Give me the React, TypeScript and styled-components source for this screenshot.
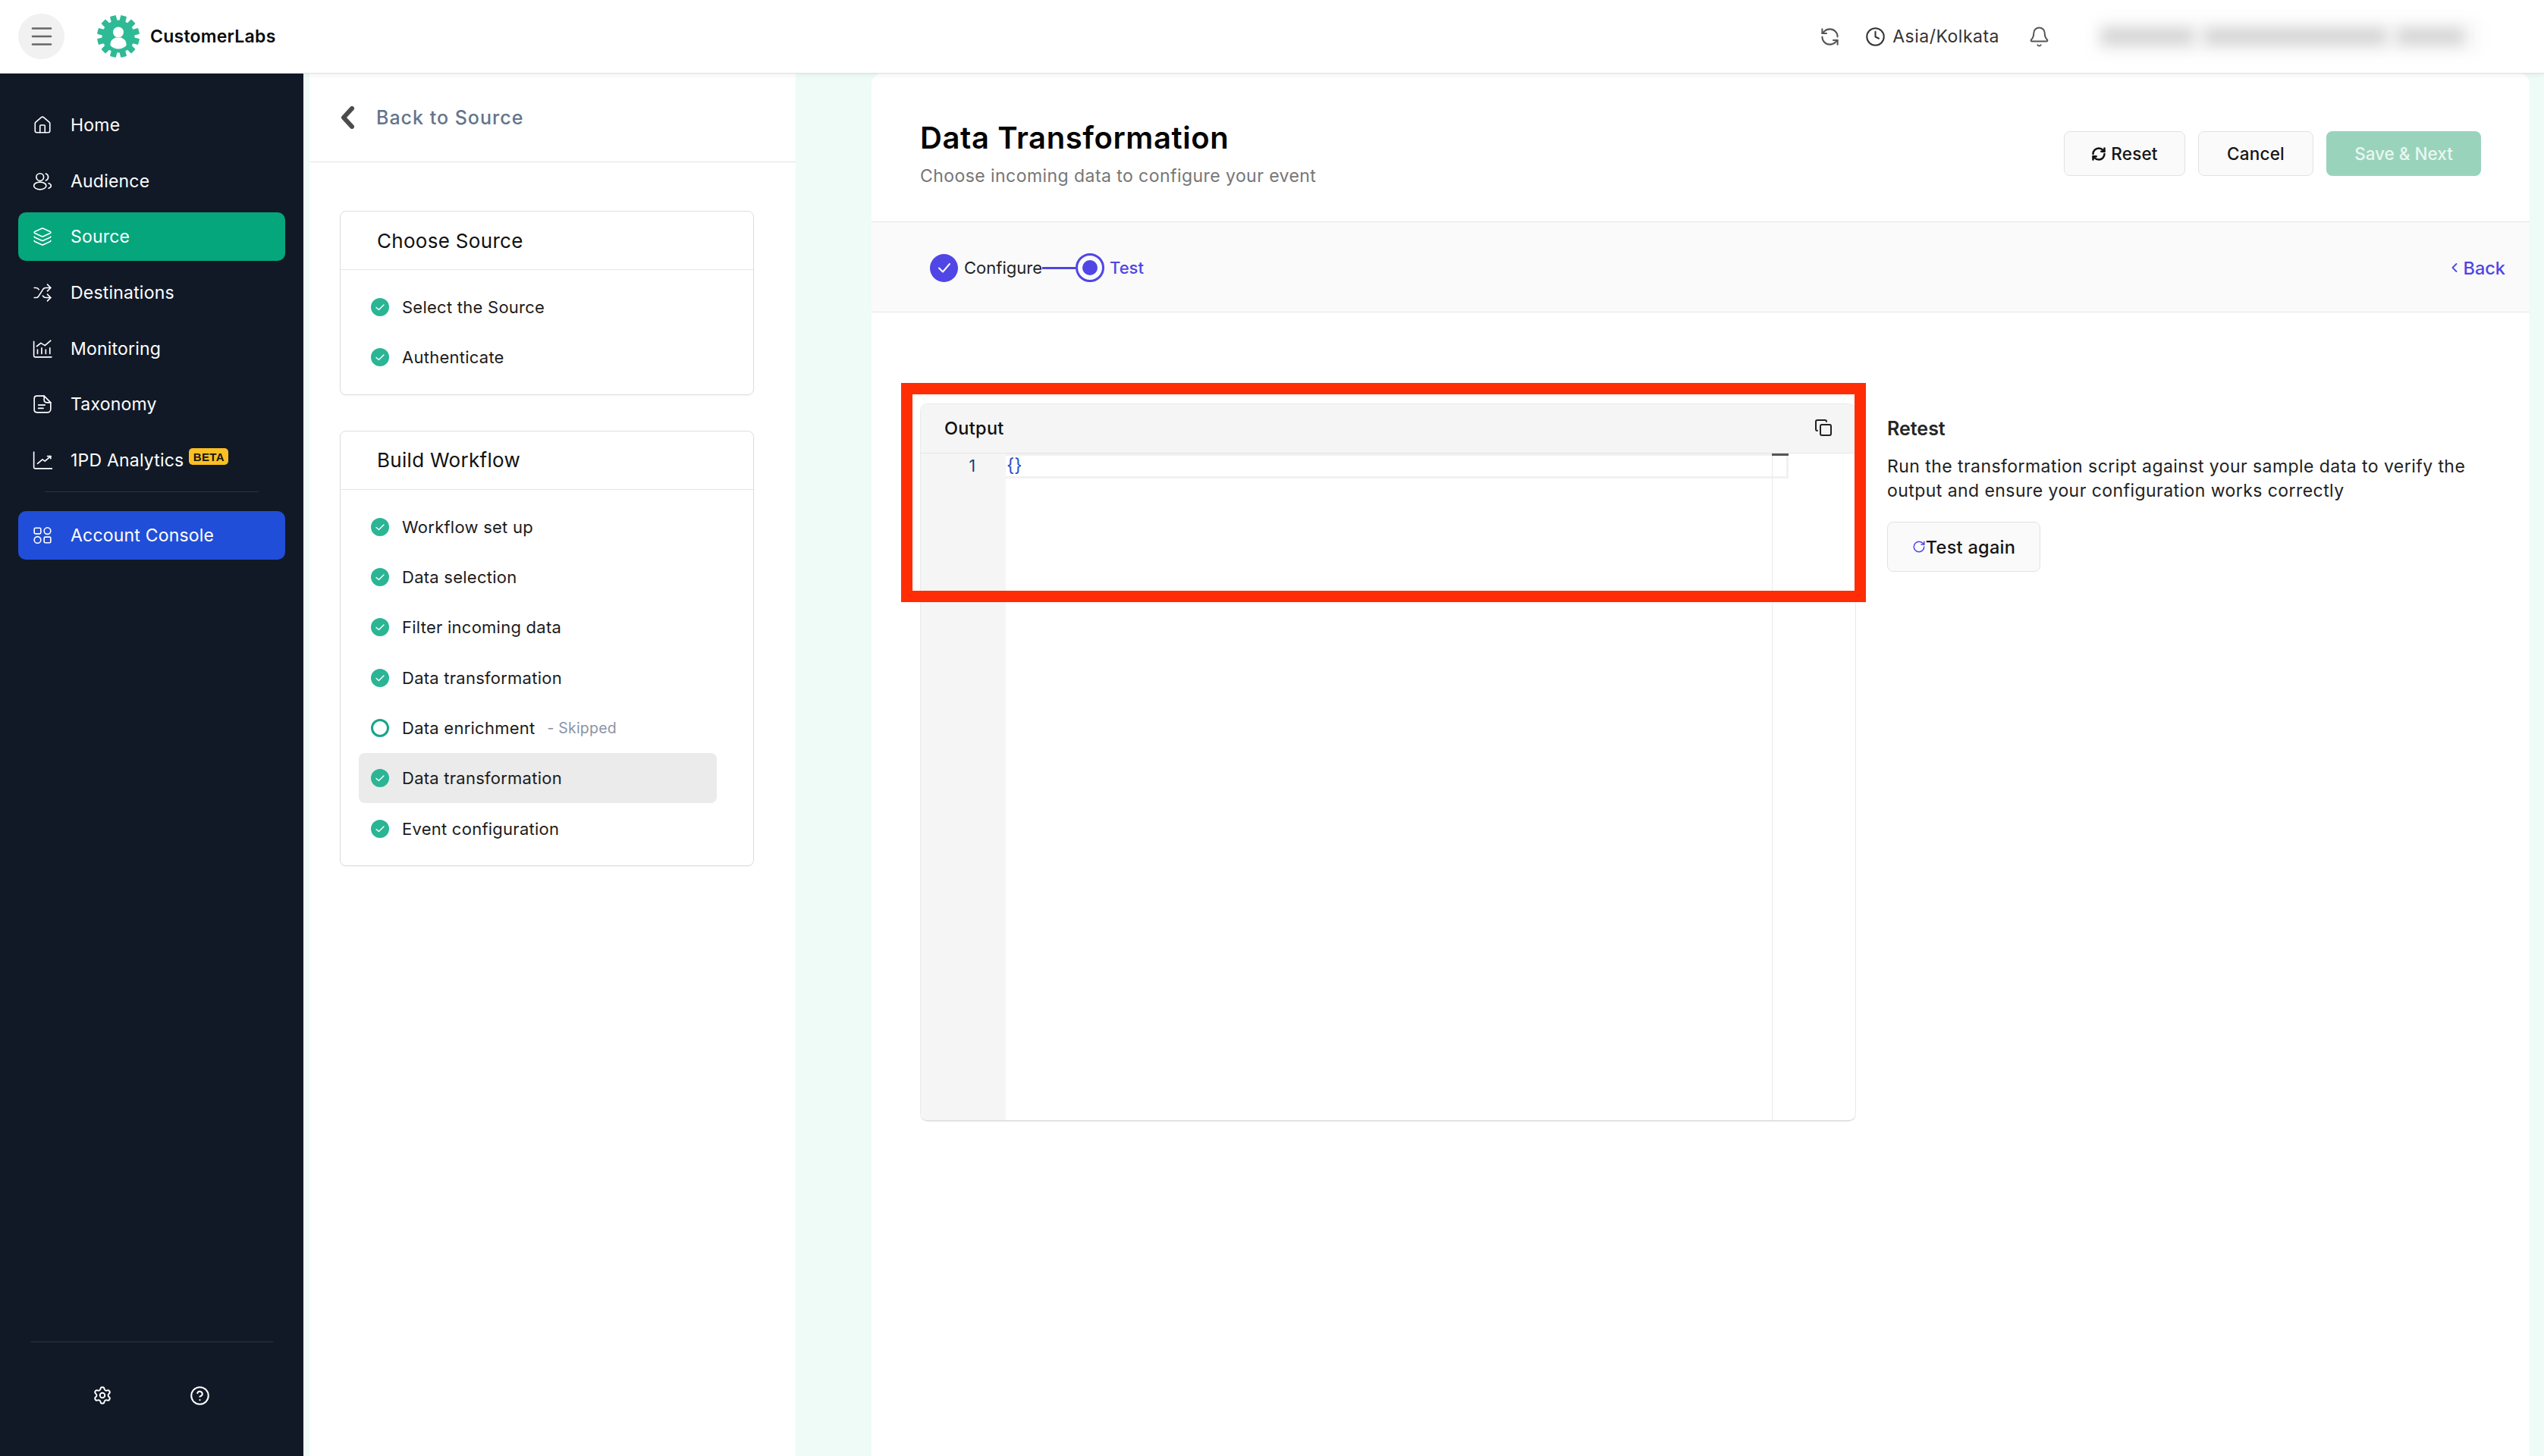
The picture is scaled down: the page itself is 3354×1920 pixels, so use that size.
import styled, { createGlobalStyle } from "styled-components";
import { Bell, CircleHelp, Clock, Copy, House, Layers, Menu, RefreshCcw, RefreshCw, RotateCw, Settings, Shuffle } from "lucide-react";

const GlobalStyle = createGlobalStyle`
    html, body {
        margin: 0;
        padding: 0;
        background: #fff;
    }
    * {
        box-sizing: border-box;
    }
    body {
        font-family: Inter, "Noto Sans", "Liberation Sans", sans-serif;
        color: #1f1f1f;
    }
`;

const Page = styled.div`
    width: 3354px;
    height: 1920px;
    display: flex;
    flex-direction: column;
    overflow: hidden;
`;

const TopBar = styled.header`
    height: 97px;
    flex: none;
    display: flex;
    align-items: center;
    padding: 0 86px 0 24px;
    background: #fff;
    border-bottom: 1px solid #e2e2e2;
    box-shadow: 0 2px 6px rgba(0, 0, 0, 0.06);
    position: relative;
    z-index: 2;
`;

const MenuButton = styled.button`
    width: 61px;
    height: 60px;
    border: none;
    border-radius: 50%;
    background: #f1f1f1;
    color: #666;
    display: flex;
    align-items: center;
    justify-content: center;
    padding: 0;
`;

const Logo = styled.div`
    margin-left: 43px;
    display: flex;
    align-items: center;
    gap: 14px;
`;

const LogoText = styled.span`
    font-size: 23px;
    font-weight: 600;
    letter-spacing: 0.25px;
    color: #0b0b0b;
`;

const TopRight = styled.div`
    margin-left: auto;
    display: flex;
    align-items: center;
    color: #555;
`;

const TimeZone = styled.div`
    margin-left: 33px;
    display: flex;
    align-items: center;
    gap: 9px;
    font-size: 23px;
    letter-spacing: 0.5px;
    color: #333;
`;

const BellWrap = styled.div`
    margin-left: 38px;
    display: flex;
`;

const BlurredUser = styled.div`
    margin-left: 61px;
    width: 504px;
    height: 45px;
    padding: 0 14px 0 6px;
    display: flex;
    align-items: center;
    gap: 14px;
    background: #f8f8f8;
    filter: blur(9px);
`;

const BlurBlob = styled.span<{ $w: number }>`
    width: ${(p) => p.$w}px;
    height: 22px;
    background: #d4d4d4;
`;

const Body = styled.div`
    flex: 1;
    min-height: 0;
    display: flex;
    background: #eefbf6;
`;

const Sidebar = styled.aside`
    width: 400px;
    flex: none;
    background: #111927;
    padding: 36px 24px 0;
    display: flex;
    flex-direction: column;
`;

const NavList = styled.nav`
    display: flex;
    flex-direction: column;
    gap: 9.7px;
`;

const NavItem = styled.a<{ $bg?: string }>`
    height: 64px;
    padding-left: 19px;
    display: flex;
    align-items: center;
    gap: 24px;
    border-radius: 10px;
    color: #fff;
    background: ${(p) => p.$bg ?? "transparent"};
    font-size: 23px;
    letter-spacing: 0.2px;
`;

const NavDivider = styled.div`
    height: 1px;
    margin: 9px 35px 25px;
    background: #2a3342;
`;

const BetaBadge = styled.span`
    margin: -10px 0 0 -17px;
    width: 52px;
    height: 22px;
    border-radius: 5px;
    background: #fbbf24;
    color: #141414;
    font-family: "Liberation Sans", sans-serif;
    font-size: 15px;
    font-weight: 700;
    letter-spacing: 0.4px;
    display: flex;
    align-items: center;
    justify-content: center;
`;

const SidebarFooter = styled.div`
    margin: auto 16px 0;
    height: 151px;
    padding: 57px 0 0 82px;
    border-top: 1px solid #2a3342;
    display: flex;
    gap: 102px;
    color: #fff;
`;

const StepsPanel = styled.section`
    width: 641px;
    margin-left: 8px;
    flex: none;
    background: #fff;
`;

const BackLink = styled.div`
    height: 117px;
    padding: 0 0 0 40px;
    border-bottom: 1px solid #dfe3e8;
    display: flex;
    align-items: center;
    gap: 28px;
    color: #64748b;
    font-size: 25px;
    font-weight: 500;
    letter-spacing: 1px;
`;

const StepCards = styled.div`
    padding: 64px 0 0 40px;
    display: flex;
    flex-direction: column;
    gap: 47px;
`;

const StepCard = styled.div`
    width: 546px;
    border: 1px solid #dedede;
    border-radius: 8px;
    box-shadow: 0 1px 2px rgba(0, 0, 0, 0.05);
`;

const CardTitle = styled.h3`
    margin: 0;
    height: 77px;
    padding-left: 48px;
    display: flex;
    align-items: center;
    border-bottom: 1px solid #e5e5e5;
    font-size: 26px;
    font-weight: 400;
    letter-spacing: 0.3px;
    color: #111;
`;

const CardRows = styled.div`
    padding: 16px 48px 15px 24px;
`;

const StepRow = styled.div<{ $active?: boolean }>`
    height: 66.3px;
    padding-left: 16px;
    display: flex;
    align-items: center;
    gap: 17px;
    border-radius: 8px;
    background: ${(p) => (p.$active ? "#ebebeb" : "transparent")};
    font-size: 22px;
    letter-spacing: 0.25px;
    color: #1c1c1c;
`;

const SkippedNote = styled.span`
    font-size: 19.5px;
    color: #8a94a6;
    letter-spacing: 0.2px;
    margin-inline-start: -1px;
`;

const MainPanel = styled.main`
    width: 2186px;
    margin-left: 100px;
    flex: none;
    background: #fff;
    border-radius: 14px 14px 0 0;
`;

const MainHeader = styled.div`
    height: 195px;
    padding: 57px 64px 0;
    display: flex;
    justify-content: space-between;
    align-items: flex-start;
`;

const PageTitle = styled.h1`
    margin: 0;
    font-size: 40px;
    line-height: 56px;
    font-weight: 600;
    letter-spacing: 0.6px;
    color: #050505;
`;

const PageSubtitle = styled.p`
    margin: 4px 0 0;
    font-size: 23px;
    line-height: 36px;
    color: #767676;
    letter-spacing: 0.44px;
`;

const HeaderActions = styled.div`
    margin-top: 19px;
    display: flex;
    gap: 17px;
`;

const OutlineButton = styled.button<{ $w: number }>`
    width: ${(p) => p.$w}px;
    height: 59px;
    border: 1px solid #e2e2e2;
    border-radius: 8px;
    background: #fafafa;
    color: #151515;
    font-family: inherit;
    font-size: 22.5px;
    font-weight: 500;
    letter-spacing: 0.2px;
    display: flex;
    align-items: center;
    justify-content: center;
    gap: 6px;
    padding: 0;
`;

const SaveButton = styled.button`
    width: 204px;
    height: 59px;
    border: none;
    border-radius: 8px;
    background: #9ad3bc;
    color: #e9f7f1;
    font-family: inherit;
    font-size: 22.5px;
    font-weight: 500;
    padding: 0;
`;

const StepperBar = styled.div`
    height: 120px;
    padding: 2px 32px 0 77px;
    background: #fafafa;
    border-top: 1px solid #e6e6e6;
    border-bottom: 1px solid #e6e6e6;
    display: flex;
    align-items: center;
    color: #4f46e5;
`;

const StepDone = styled.span`
    width: 37px;
    height: 37px;
    border-radius: 50%;
    background: #4f46e5;
    display: flex;
    align-items: center;
    justify-content: center;
`;

const StepLabel = styled.span<{ $current?: boolean }>`
    margin-left: ${(p) => (p.$current ? 7 : 8)}px;
    font-size: 22px;
    font-weight: ${(p) => (p.$current ? 500 : 400)};
    color: ${(p) => (p.$current ? "#4f46e5" : "#222")};
`;

const StepLine = styled.span`
    width: 44px;
    height: 3px;
    background: #4f46e5;
`;

const StepRing = styled.span`
    width: 38px;
    height: 38px;
    border-radius: 50%;
    border: 3px solid #4f46e5;
    display: flex;
    align-items: center;
    justify-content: center;
    &::after {
        content: "";
        width: 20px;
        height: 20px;
        border-radius: 50%;
        background: #4f46e5;
    }
`;

const BackAction = styled.a`
    margin-left: auto;
    display: flex;
    align-items: center;
    gap: 7px;
    font-size: 23.5px;
    font-weight: 500;
    color: #4f46e5;
`;

const Workspace = styled.div`
    padding: 120px 0 0 64px;
    display: flex;
    gap: 41px;
`;

const EditorCard = styled.div`
    width: 1234px;
    height: 947px;
    position: relative;
    border: 1px solid #e9e9e9;
    border-bottom: 2px solid #e2e2e2;
    border-radius: 10px;
    display: flex;
    flex-direction: column;
`;

const EditorHeader = styled.div`
    height: 65px;
    flex: none;
    padding: 0 30px 2px 31px;
    background: #f5f5f5;
    border-bottom: 1px solid #e6e6e6;
    border-radius: 10px 10px 0 0;
    display: flex;
    align-items: center;
    justify-content: space-between;
    font-size: 23.5px;
    font-weight: 500;
    letter-spacing: 0.3px;
    color: #111;
`;

const EditorBody = styled.div`
    flex: 1;
    min-height: 0;
    display: flex;
`;

const LineGutter = styled.div`
    width: 112px;
    flex: none;
    background: #f5f5f5;
    border-radius: 0 0 0 10px;
    padding-right: 40px;
    text-align: right;
    font-size: 21px;
    line-height: 33px;
    color: #1e3a6e;
`;

const CodeArea = styled.div`
    flex: 1;
    position: relative;
`;

const CurrentLine = styled.div`
    height: 33px;
    margin-right: 88px;
    padding-left: 1px;
    border: 3px solid #f1f1f1;
    border-left: none;
    font-size: 24px;
    line-height: 26px;
    color: #2a52c8;
`;

const OverviewRuler = styled.div`
    position: absolute;
    top: 0;
    bottom: 0;
    right: 109px;
    width: 1px;
    background: #ececec;
    &::before {
        content: "";
        position: absolute;
        left: 0;
        top: 0;
        width: 22px;
        height: 3px;
        background: #555;
    }
`;

const RedFrame = styled.div`
    position: absolute;
    left: -26px;
    top: -28px;
    width: 1272px;
    height: 289px;
    border: 15px solid #ff2c05;
    pointer-events: none;
`;

const RetestColumn = styled.div`
    width: 790px;
    padding-top: 15px;
`;

const RetestTitle = styled.h4`
    margin: 0;
    font-size: 25px;
    line-height: 36px;
    font-weight: 600;
    color: #262626;
`;

const RetestText = styled.p`
    margin: 17px 0 0;
    font-size: 23px;
    line-height: 31.5px;
    letter-spacing: 0.44px;
    color: #222;
`;

const RetestButton = styled(OutlineButton)`
    height: 66px;
    margin-top: 25px;
    gap: 0;
    font-size: 23.5px;
    letter-spacing: 0.3px;
`;

const GEAR_TEETH = Array.from({ length: 12 }, (_, i) => i * 30);

function LogoMark() {
    return <svg width="56" height="58" viewBox="-28 -29 56 58">
        <circle r="21.5" fill="#2fba96" />
        {GEAR_TEETH.map((deg) => (
            <rect key={deg} x="-4" y="-28" width="8" height="10" rx="1" fill="#2fba96" transform={`rotate(${deg + 15})`} />
        ))}
        <circle cx="0" cy="-5.5" r="7" fill="#fff" />
        <path d="M-10.5 12 C-11 6 -8 3.5 -3.5 1.5 L3.5 1.5 C8 3.5 11 6 10.5 12 A14.5 14.5 0 0 1 -10.5 12Z" fill="#fff" />
    </svg>;
}

function StepCheck() {
    return <svg width="24" height="24" viewBox="0 0 24 24" style={{ flex: "none" }}>
        <circle cx="12" cy="12" r="12" fill="#2bb594" />
        <path d="M7 12.5l3.4 3L17 9" fill="none" stroke="#fff" strokeWidth="1.4" strokeLinecap="round" strokeLinejoin="round" />
    </svg>;
}

function StepSkipped() {
    return <svg width="24" height="24" viewBox="0 0 24 24" style={{ flex: "none" }}>
        <circle cx="12" cy="12" r="10.5" fill="#fff" stroke="#17a589" strokeWidth="3" />
    </svg>;
}

function NavSvg({ children }: { children: React.ReactNode }) {
    return <svg width="26" height="26" viewBox="0 0 24 24" fill="none" stroke="currentColor" strokeWidth="1.5" strokeLinecap="round" strokeLinejoin="round" style={{ flex: "none" }}>
        {children}
    </svg>;
}

const navItems = [
    { label: "Home", icon: <House size={26} strokeWidth={1.5} /> },
    {
        label: "Audience",
        icon: <NavSvg>
            <circle cx="9" cy="7" r="4.5" />
            <ellipse cx="9" cy="17.5" rx="7.5" ry="4.5" />
            <path d="M16 2.8a4.3 4.3 0 0 1 0 8.2" />
            <path d="M19.5 14.5c2 .7 3 1.8 3 3s-1 2.3-3 3" />
        </NavSvg>,
    },
    { label: "Source", icon: <Layers size={26} strokeWidth={1.5} />, bg: "#05a67c" },
    { label: "Destinations", icon: <Shuffle size={26} strokeWidth={1.5} /> },
    {
        label: "Monitoring",
        icon: <NavSvg>
            <path d="M1.5 3v17.5a1.5 1.5 0 0 0 1.5 1.5h20" />
            <path d="M6 18v-5M11 18v-7M16 18v-5M21 18v-7" />
            <path d="M5 9l5-4 5 3 7-6" />
        </NavSvg>,
    },
    {
        label: "Taxonomy",
        icon: <NavSvg>
            <path d="M5 2h9l8 8v8a4 4 0 0 1-4 4H5a3 3 0 0 1-3-3V5a3 3 0 0 1 3-3z" />
            <path d="M14 2v5a3 3 0 0 0 3 3h5" />
            <path d="M7 13h8M7 17h6" />
        </NavSvg>,
    },
    {
        label: "1PD Analytics",
        icon: <NavSvg>
            <path d="M1.5 2v18.5a1.5 1.5 0 0 0 1.5 1.5h21" />
            <path d="M6 16l6-5 3 2 7-6" />
            <path d="M18 7h4v3" />
        </NavSvg>,
        beta: true,
    },
];

export default function App() {
    return <Page>
        <GlobalStyle />
        <TopBar>
            <MenuButton><Menu size={36} strokeWidth={1.7} /></MenuButton>
            <Logo>
                <LogoMark />
                <LogoText>CustomerLabs</LogoText>
            </Logo>
            <TopRight>
                <RefreshCcw size={27} strokeWidth={1.8} />
                <TimeZone>
                    <Clock size={27} strokeWidth={1.8} />
                    Asia/Kolkata
                </TimeZone>
                <BellWrap><Bell size={29} strokeWidth={1.6} /></BellWrap>
                <BlurredUser>
                    <BlurBlob $w={122} />
                    <BlurBlob $w={240} />
                    <BlurBlob $w={88} />
                </BlurredUser>
            </TopRight>
        </TopBar>
        <Body>
            <Sidebar>
                <NavList>
                    {navItems.map((item) => (
                        <NavItem key={item.label} $bg={item.bg}>
                            {item.icon}
                            {item.label}
                            {item.beta && <BetaBadge>BETA</BetaBadge>}
                        </NavItem>
                    ))}
                </NavList>
                <NavDivider />
                <NavItem $bg="#214ed8">
                    <NavSvg>
                        <rect x="2" y="3" width="8" height="7" rx="1.5" />
                        <circle cx="18" cy="6.5" r="4" />
                        <circle cx="6" cy="17.5" r="4" />
                        <rect x="14" y="14" width="8" height="7" rx="1.5" />
                    </NavSvg>
                    Account Console
                </NavItem>
                <SidebarFooter>
                    <Settings size={26} strokeWidth={1.8} />
                    <CircleHelp size={27} strokeWidth={1.8} />
                </SidebarFooter>
            </Sidebar>
            <StepsPanel>
                <BackLink>
                    <svg width="20" height="30" viewBox="0 0 20 30">
                        <path d="M16 3L5 15l11 12" fill="none" stroke="#4b4b4b" strokeWidth="6" strokeLinecap="round" strokeLinejoin="round" />
                    </svg>
                    Back to Source
                </BackLink>
                <StepCards>
                    <StepCard>
                        <CardTitle>Choose Source</CardTitle>
                        <CardRows>
                            <StepRow><StepCheck />Select the Source</StepRow>
                            <StepRow><StepCheck />Authenticate</StepRow>
                        </CardRows>
                    </StepCard>
                    <StepCard>
                        <CardTitle>Build Workflow</CardTitle>
                        <CardRows>
                            <StepRow><StepCheck />Workflow set up</StepRow>
                            <StepRow><StepCheck />Data selection</StepRow>
                            <StepRow><StepCheck />Filter incoming data</StepRow>
                            <StepRow><StepCheck />Data transformation</StepRow>
                            <StepRow><StepSkipped />Data enrichment<SkippedNote>- Skipped</SkippedNote></StepRow>
                            <StepRow $active><StepCheck />Data transformation</StepRow>
                            <StepRow><StepCheck />Event configuration</StepRow>
                        </CardRows>
                    </StepCard>
                </StepCards>
            </StepsPanel>
            <MainPanel>
                <MainHeader>
                    <div>
                        <PageTitle>Data Transformation</PageTitle>
                        <PageSubtitle>Choose incoming data to configure your event</PageSubtitle>
                    </div>
                    <HeaderActions>
                        <OutlineButton $w={160}><RefreshCw size={20} strokeWidth={3} color="#111" />Reset</OutlineButton>
                        <OutlineButton $w={152}>Cancel</OutlineButton>
                        <SaveButton>Save &amp; Next</SaveButton>
                    </HeaderActions>
                </MainHeader>
                <StepperBar>
                    <StepDone>
                        <svg width="22" height="22" viewBox="0 0 22 22">
                            <path d="M4 11.5l5 5L18 6" fill="none" stroke="#fff" strokeWidth="2" strokeLinecap="round" strokeLinejoin="round" />
                        </svg>
                    </StepDone>
                    <StepLabel>Configure</StepLabel>
                    <StepLine />
                    <StepRing />
                    <StepLabel $current>Test</StepLabel>
                    <BackAction>
                        <svg width="10" height="14" viewBox="0 0 10 14">
                            <path d="M7.5 2L2.5 7l5 5" fill="none" stroke="#4f46e5" strokeWidth="1.8" strokeLinecap="round" strokeLinejoin="round" />
                        </svg>
                        Back
                    </BackAction>
                </StepperBar>
                <Workspace>
                    <EditorCard>
                        <EditorHeader>
                            Output
                            <Copy size={24} strokeWidth={2} color="#222" />
                        </EditorHeader>
                        <EditorBody>
                            <LineGutter>1</LineGutter>
                            <CodeArea>
                                <CurrentLine>{"{}"}</CurrentLine>
                                <OverviewRuler />
                            </CodeArea>
                        </EditorBody>
                        <RedFrame />
                    </EditorCard>
                    <RetestColumn>
                        <RetestTitle>Retest</RetestTitle>
                        <RetestText>
                            Run the transformation script against your sample data to verify the output and ensure your configuration works correctly
                        </RetestText>
                        <RetestButton $w={202}>
                            <RotateCw size={18} strokeWidth={2} color="#4f46e5" />
                            Test again
                        </RetestButton>
                    </RetestColumn>
                </Workspace>
            </MainPanel>
        </Body>
    </Page>;
}
